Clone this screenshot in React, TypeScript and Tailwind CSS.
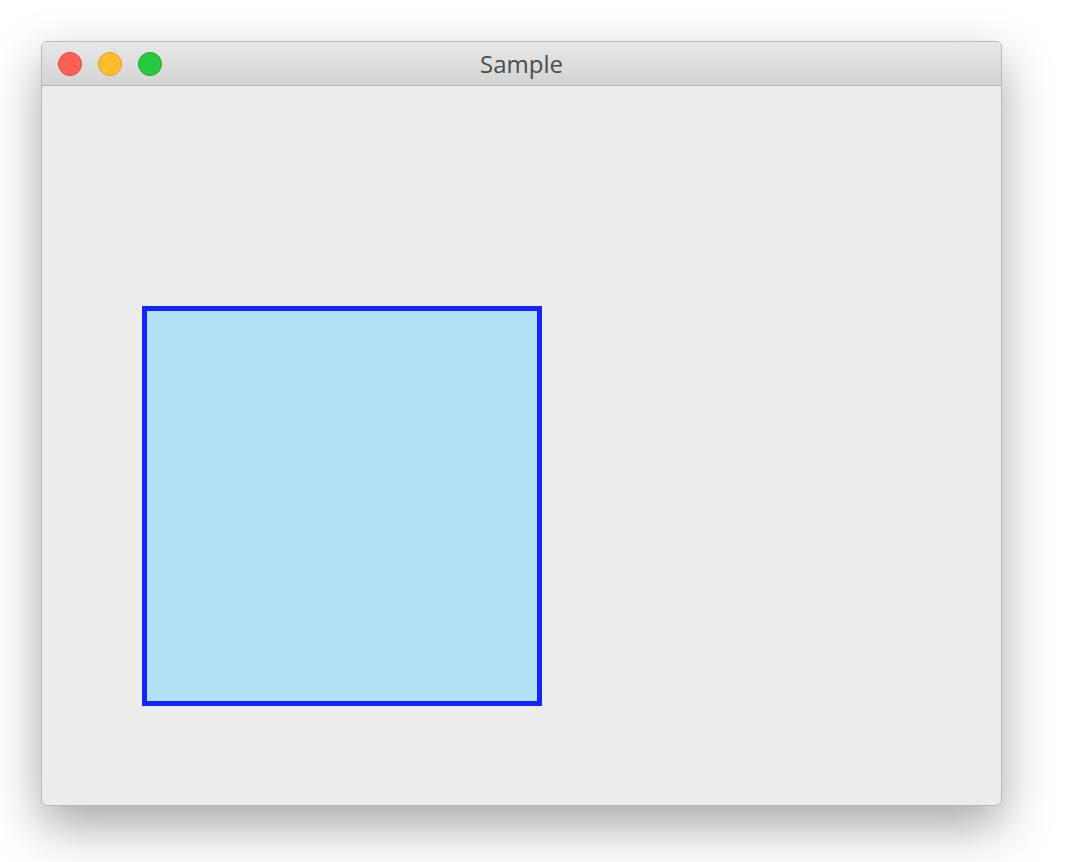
export default function App() {
  return (
    <div className="h-[862px] w-[1078px] bg-white pt-[41px] pl-[41px]" style={{ fontFamily: '"Open Sans", "Liberation Sans", sans-serif' }}>
      <div className="flex h-[765px] w-[961px] flex-col overflow-hidden rounded-[6px] border border-[#b9b9b9] bg-[#ececec] shadow-[0_20px_50px_rgba(0,0,0,0.35)]">
        <div className="relative flex h-[44px] shrink-0 items-center border-b border-[#b4b4b4] bg-gradient-to-b from-[#e8e8e8] to-[#d3d3d3] pl-[16px]">
          <div className="flex gap-[16px]">
            <span className="h-[24px] w-[24px] rounded-full border border-[#e2463f] bg-[#ff5f57]" />
            <span className="h-[24px] w-[24px] rounded-full border border-[#e1a116] bg-[#febc2e]" />
            <span className="h-[24px] w-[24px] rounded-full border border-[#14ae2c] bg-[#28c840]" />
          </div>
          <div className="absolute inset-0 flex items-center justify-center text-[24px] text-[#4d4d4d]">Sample</div>
        </div>
        <div className="flex-1 pl-[100px] pt-[220px]">
          <div className="h-[400px] w-[400px] border-[5px] border-[#1424ff] bg-[#b3e1f5]" />
        </div>
      </div>
    </div>
  );
}
